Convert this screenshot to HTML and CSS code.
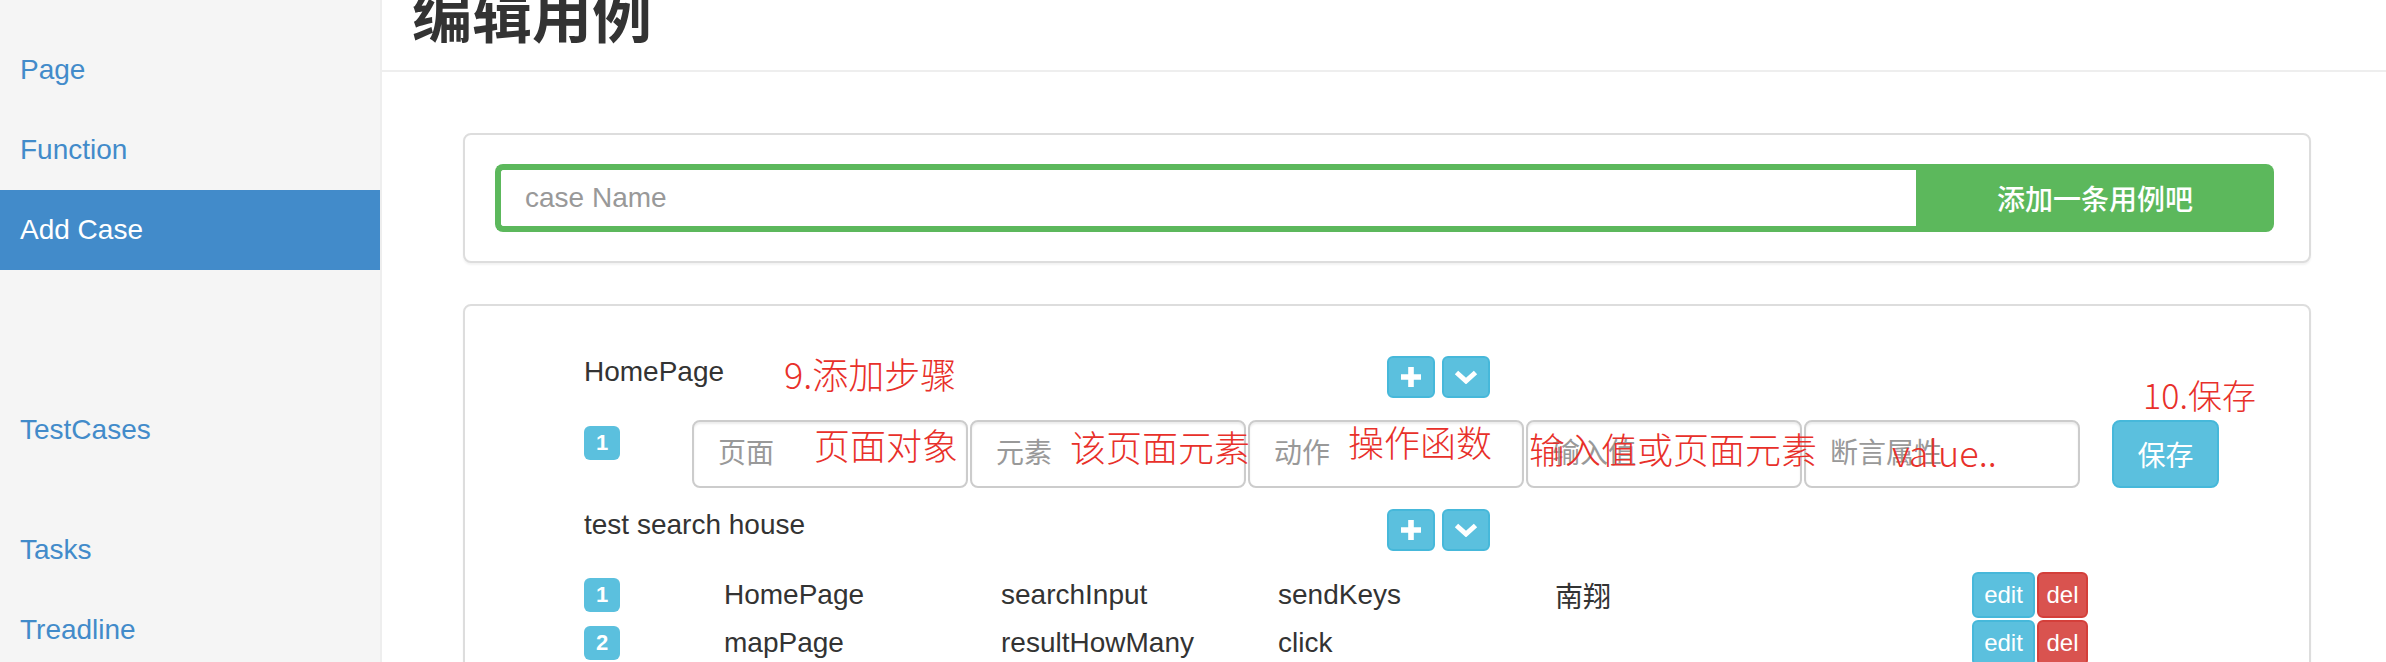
FILE: index.html
```html
<!DOCTYPE html>
<html lang="zh-CN">
<head>
<meta charset="utf-8">
<title>编辑用例</title>
<link rel="stylesheet" href="styles.css">
</head>
<body>
<div class="app">
  <aside class="sidebar">
    <ul class="nav">
      <li><a class="nav-link" href="#">Page</a></li>
      <li><a class="nav-link" href="#">Function</a></li>
      <li class="active"><a class="nav-link" href="#">Add Case</a></li>
    </ul>
    <ul class="nav nav-second">
      <li><a class="nav-link" href="#">TestCases</a></li>
    </ul>
    <ul class="nav nav-third">
      <li><a class="nav-link" href="#">Tasks</a></li>
      <li><a class="nav-link" href="#">Treadline</a></li>
    </ul>
  </aside>
  <main class="main">
    <header class="page-header"><h1 class="title">编辑用例</h1></header>
    <div class="content">
      <section class="panel panel-add">
        <div class="input-group">
          <input class="case-input" type="text" placeholder="case Name">
          <button class="btn-add" type="button">添加一条用例吧</button>
        </div>
      </section>
      <section class="panel panel-cases">
        <div class="case">
          <div class="case-head">
            <div class="case-name">HomePage</div>
            <div class="icon-btns">
              <button class="icon-btn" type="button"><svg width="20" height="20" viewBox="0 0 20 20"><path d="M7.2 0h5.6v7.2H20v5.6h-7.2V20H7.2v-7.2H0V7.2h7.2z" fill="#fff"/></svg></button>
              <button class="icon-btn" type="button"><svg width="24" height="14" viewBox="0 0 24 14"><path d="M2.5 2.5l9.5 8.5 9.5-8.5" fill="none" stroke="#fff" stroke-width="5" stroke-linejoin="miter"/></svg></button>
            </div>
          </div>
          <div class="step-edit">
            <span class="badge badge-edit">1</span>
            <div class="fields">
              <input class="field" type="text" placeholder="页面">
              <input class="field" type="text" placeholder="元素">
              <input class="field" type="text" placeholder="动作">
              <input class="field" type="text" placeholder="输入值">
              <input class="field" type="text" placeholder="断言属性">
            </div>
            <button class="btn-save" type="button">保存</button>
          </div>
        </div>
        <div class="case case-second">
          <div class="case-head">
            <div class="case-name">test search house</div>
            <div class="icon-btns">
              <button class="icon-btn" type="button"><svg width="20" height="20" viewBox="0 0 20 20"><path d="M7.2 0h5.6v7.2H20v5.6h-7.2V20H7.2v-7.2H0V7.2h7.2z" fill="#fff"/></svg></button>
              <button class="icon-btn" type="button"><svg width="24" height="14" viewBox="0 0 24 14"><path d="M2.5 2.5l9.5 8.5 9.5-8.5" fill="none" stroke="#fff" stroke-width="5" stroke-linejoin="miter"/></svg></button>
            </div>
          </div>
          <div class="step-list">
            <div class="step-row">
              <span class="badge">1</span>
              <span>HomePage</span>
              <span>searchInput</span>
              <span>sendKeys</span>
              <span class="cjk">南翔</span>
              <span></span>
              <div class="row-actions">
                <button class="btn-xs btn-edit" type="button">edit</button>
                <button class="btn-xs btn-del" type="button">del</button>
              </div>
            </div>
            <div class="step-row">
              <span class="badge">2</span>
              <span>mapPage</span>
              <span>resultHowMany</span>
              <span>click</span>
              <span></span>
              <span></span>
              <div class="row-actions">
                <button class="btn-xs btn-edit" type="button">edit</button>
                <button class="btn-xs btn-del" type="button">del</button>
              </div>
            </div>
          </div>
        </div>
        <span class="note note-step">9.添加步骤</span>
        <span class="note note-page">页面对象</span>
        <span class="note note-elem">该页面元素</span>
        <span class="note note-func">操作函数</span>
        <span class="note note-input">输入值或页面元素</span>
        <span class="note note-value">value..</span>
        <span class="note note-save">10.保存</span>
      </section>
    </div>
  </main>
</div>
</body>
</html>
```
FILE: styles.css
```css
* { box-sizing: border-box; }

html, body {
  margin: 0;
  padding: 0;
  width: 2386px;
  height: 662px;
  overflow: hidden;
  background: #fff;
}

body {
  font-family: "Liberation Sans", "Noto Sans CJK SC", sans-serif;
  font-size: 28px;
  line-height: 40px;
  color: #333;
}

.app {
  display: flex;
  height: 662px;
}

/* Sidebar */
.sidebar {
  flex: 0 0 382px;
  background: #f5f5f5;
  border-right: 2px solid #eee;
  padding-top: 30px;
}

.nav {
  list-style: none;
  margin: 0;
  padding: 0;
}

.nav-second { margin-top: 120px; }
.nav-third { margin-top: 40px; }

.nav-link {
  display: block;
  padding: 20px 20px;
  color: #428bca;
  text-decoration: none;
}

.nav .active .nav-link {
  background: #428bca;
  color: #fff;
}

/* Main */
.main {
  flex: 1;
  min-width: 0;
}

.page-header {
  height: 72px;
  border-bottom: 2px solid #eee;
  padding: 0 0 28px 30px;
  display: flex;
  align-items: flex-end;
}

.title {
  margin: 0;
  font-family: "Noto Sans CJK SC", sans-serif;
  font-weight: 700;
  font-size: 60px;
  line-height: 60px;
  color: #333;
}

.content {
  padding: 61px 75px 0 81px;
}

.panel {
  background: #fff;
  border: 2px solid #ddd;
  border-radius: 8px;
  box-shadow: 0 2px 2px rgba(0, 0, 0, 0.05);
}

.panel-add {
  padding: 29px 35px 29px 30px;
}

.input-group {
  display: flex;
  height: 68px;
}

.case-input {
  flex: 1;
  min-width: 0;
  height: 68px;
  border: 6px solid #5cb85c;
  border-right: 0;
  border-radius: 8px 0 0 8px;
  padding: 0 24px;
  font-family: "Liberation Sans", sans-serif;
  font-size: 28px;
  color: #555;
  outline: none;
}

.case-input::placeholder { color: #999; }

.btn-add {
  flex: 0 0 358px;
  border: 0;
  background: #5cb85c;
  color: #fff;
  border-radius: 0 8px 8px 0;
  font-family: "Noto Sans CJK SC", sans-serif;
  font-size: 28px;
  font-weight: 500;
}

.panel-cases {
  margin-top: 41px;
  position: relative;
  padding: 46px 40px 40px 119px;
}

.case-head {
  display: flex;
  align-items: flex-start;
  height: 46px;
}

.case-name {
  width: 803px;
  line-height: 40px;
}

.icon-btns {
  display: flex;
  gap: 7px;
  margin-top: 4px;
}

.icon-btn {
  width: 48px;
  height: 42px;
  padding: 0;
  background: #5bc0de;
  border: 2px solid #46b8da;
  border-radius: 6px;
  display: flex;
  align-items: center;
  justify-content: center;
}

.step-edit {
  display: flex;
  align-items: flex-start;
  margin-top: 22px;
}

.badge {
  width: 36px;
  height: 34px;
  background: #5bc0de;
  color: #fff;
  border-radius: 6px;
  font-weight: 700;
  font-size: 22px;
  line-height: 1;
  display: flex;
  align-items: center;
  justify-content: center;
}

.badge-edit {
  margin-top: 6px;
  margin-right: 72px;
}

.fields {
  display: flex;
  gap: 2px;
}

.field {
  width: 276px;
  height: 68px;
  border: 2px solid #ccc;
  border-radius: 8px;
  padding: 0 24px;
  font-family: "Liberation Sans", "Noto Sans CJK SC", sans-serif;
  font-size: 28px;
  color: #555;
  box-shadow: inset 0 2px 2px rgba(0, 0, 0, 0.075);
  outline: none;
}

.field::placeholder { color: #999; }

.btn-save {
  margin-left: 32px;
  width: 107px;
  height: 68px;
  background: #5bc0de;
  border: 2px solid #46b8da;
  border-radius: 8px;
  color: #fff;
  font-family: "Noto Sans CJK SC", sans-serif;
  font-size: 28px;
  padding: 0;
}

.case-second { margin-top: 17px; }

.step-list { margin-top: 21px; }

.step-row {
  display: grid;
  grid-template-columns: 140px 277px 277px 277px 277px 140px auto;
  align-items: center;
  height: 46px;
}

.step-row + .step-row { margin-top: 2px; }

.cjk { font-family: "Noto Sans CJK SC", sans-serif; }

.row-actions {
  display: flex;
  gap: 2px;
}

.btn-xs {
  height: 46px;
  padding: 0;
  border: 2px solid;
  border-radius: 6px;
  color: #fff;
  font-family: "Liberation Sans", sans-serif;
  font-size: 24px;
}

.btn-edit { width: 63px; background: #5bc0de; border-color: #46b8da; }
.btn-del { width: 51px; background: #d9534f; border-color: #d43f3a; }

/* Red annotations overlaid on the screenshot */
.note {
  position: absolute;
  color: #e8302a;
  font-family: "Noto Sans CJK SC", sans-serif;
  font-weight: 300;
  font-size: 36px;
  line-height: 36px;
  white-space: nowrap;
}

.note-step { left: 319px; top: 49px; }
.note-page { left: 349px; top: 120px; }
.note-elem { left: 605px; top: 122px; }
.note-func { left: 883px; top: 117px; }
.note-input { left: 1064px; top: 124px; }
.note-value { left: 1427px; top: 127px; }
.note-save { left: 1678px; top: 71px; font-size: 34px; }
```
